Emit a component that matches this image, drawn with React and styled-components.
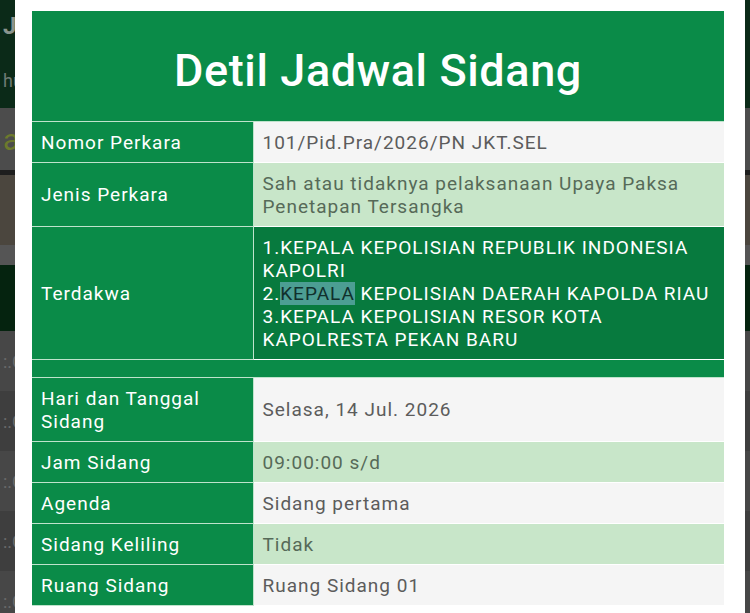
import styled, { createGlobalStyle } from "styled-components";

const GlobalStyle = createGlobalStyle`
  html, body {
    margin: 0;
    padding: 0;
    height: 100%;
    overflow: hidden;
    font-family: Roboto, "Liberation Sans", sans-serif;
  }
`;

const Page = styled.div`
  position: relative;
  width: 750px;
  height: 613px;
  overflow: hidden;
  background: #3f3f3f;
`;

const Backdrop = styled.div`
  display: flex;
  flex-direction: column;
`;

const BgBand = styled.div`
  height: ${(p) => p.$h}px;
  background: ${(p) => p.$bg};
  color: ${(p) => p.$fg || "#7f8a84"};
  font-size: ${(p) => p.$size || 18}px;
  font-weight: ${(p) => p.$weight || 400};
  display: flex;
  align-items: center;
  padding-left: 3px;
  border-bottom: ${(p) => (p.$line ? `${p.$line}px solid #1e1e1e` : "none")};
  white-space: nowrap;
`;

const Dialog = styled.div`
  position: absolute;
  top: 0;
  left: 15px;
  width: 730px;
  height: 613px;
  background: #ffffff;
  box-sizing: border-box;
  padding: 11px 21px 0 17px;
`;

const Table = styled.table`
  width: 692px;
  border-collapse: collapse;
  table-layout: fixed;
  font-size: 19px;
  letter-spacing: 1px;
`;

const LabelCol = styled.col`
  width: 221px;
`;

const Title = styled.th`
  height: 110px;
  padding: 10px 0 0;
  box-sizing: border-box;
  background: #0a8b48;
  color: #ffffff;
  font-size: 45px;
  font-weight: 500;
  letter-spacing: 0.6px;
  text-align: center;
  border-bottom: 1px solid #bfe3cc;
`;

const Label = styled.td`
  padding: 9px 9px 8px;
  line-height: 23px;
  background: #0a8b48;
  color: #ffffff;
  vertical-align: middle;
  border-bottom: 1px solid #bfe3cc;
  border-right: 1px solid #bfe3cc;
`;

const tones = {
  plain: { bg: "#f5f5f5", fg: "#5c5c5c" },
  tint: { bg: "#c8e6c9", fg: "#566a58" },
  dark: { bg: "#077a3e", fg: "#ffffff" },
};

const Value = styled.td`
  padding: 9px 9px 8px;
  line-height: 23px;
  background: ${(p) => tones[p.$tone].bg};
  color: ${(p) => tones[p.$tone].fg};
  vertical-align: middle;
  border-bottom: 1px solid #ffffff;
`;

const Spacer = styled.td`
  height: 0;
  padding: 9px 0 8px;
  background: #0a8b48;
  border-bottom: 1px solid #bfe3cc;
`;

const Selected = styled.span`
  background: #4c9e93;
  color: #10302c;
`;

const rows = [
  { label: "Nomor Perkara", value: "101/Pid.Pra/2026/PN JKT.SEL", tone: "plain" },
  {
    label: "Jenis Perkara",
    value: (
      <>
        Sah atau tidaknya pelaksanaan Upaya Paksa
        <br />
        Penetapan Tersangka
      </>
    ),
    tone: "tint",
  },
  {
    label: "Terdakwa",
    value: (
      <>
        1.KEPALA KEPOLISIAN REPUBLIK INDONESIA
        <br />
        KAPOLRI
        <br />
        2.<Selected>KEPALA</Selected> KEPOLISIAN DAERAH KAPOLDA RIAU
        <br />
        3.KEPALA KEPOLISIAN RESOR KOTA
        <br />
        KAPOLRESTA PEKAN BARU
      </>
    ),
    tone: "dark",
  },
  { spacer: true },
  {
    label: (
      <>
        Hari dan Tanggal
        <br />
        Sidang
      </>
    ),
    value: "Selasa, 14 Jul. 2026",
    tone: "plain",
  },
  { label: "Jam Sidang", value: "09:00:00 s/d", tone: "tint" },
  { label: "Agenda", value: "Sidang pertama", tone: "plain" },
  { label: "Sidang Keliling", value: "Tidak", tone: "tint" },
  { label: "Ruang Sidang", value: "Ruang Sidang 01", tone: "plain" },
];

export default function App() {
  return (
    <>
      <GlobalStyle />
      <Page>
        <Backdrop>
          <BgBand $h={52} $bg="#0b2a18" $fg="#8a948e" $size={24} $weight={700}>
            J
          </BgBand>
          <BgBand $h={56} $bg="#0b2a18" $fg="#6f7a73">
            hu
          </BgBand>
          <BgBand $h={62} $bg="#4c4c4c" $fg="#6d7a2c" $size={30} $line={5}>
            a
          </BgBand>
          <BgBand $h={70} $bg="#4b463e" />
          <BgBand $h={20} $bg="#555555" />
          <BgBand $h={66} $bg="#05230f" />
          <BgBand $h={60} $bg="#474747" $fg="#6a6a6a">
            :.C
          </BgBand>
          <BgBand $h={60} $bg="#3e3e3e" $fg="#6a6a6a">
            :.C
          </BgBand>
          <BgBand $h={60} $bg="#474747" $fg="#6a6a6a">
            :.C
          </BgBand>
          <BgBand $h={60} $bg="#3e3e3e" $fg="#6a6a6a">
            :.C
          </BgBand>
          <BgBand $h={60} $bg="#474747" $fg="#6a6a6a">
            :.C
          </BgBand>
        </Backdrop>
        <Dialog>
          <Table>
            <colgroup>
              <LabelCol />
              <col />
            </colgroup>
            <thead>
              <tr>
                <Title colSpan={2}>Detil Jadwal Sidang</Title>
              </tr>
            </thead>
            <tbody>
              {rows.map((row, i) =>
                row.spacer ? (
                  <tr key={i}>
                    <Spacer colSpan={2} />
                  </tr>
                ) : (
                  <tr key={i}>
                    <Label>{row.label}</Label>
                    <Value $tone={row.tone}>{row.value}</Value>
                  </tr>
                )
              )}
            </tbody>
          </Table>
        </Dialog>
      </Page>
    </>
  );
}
